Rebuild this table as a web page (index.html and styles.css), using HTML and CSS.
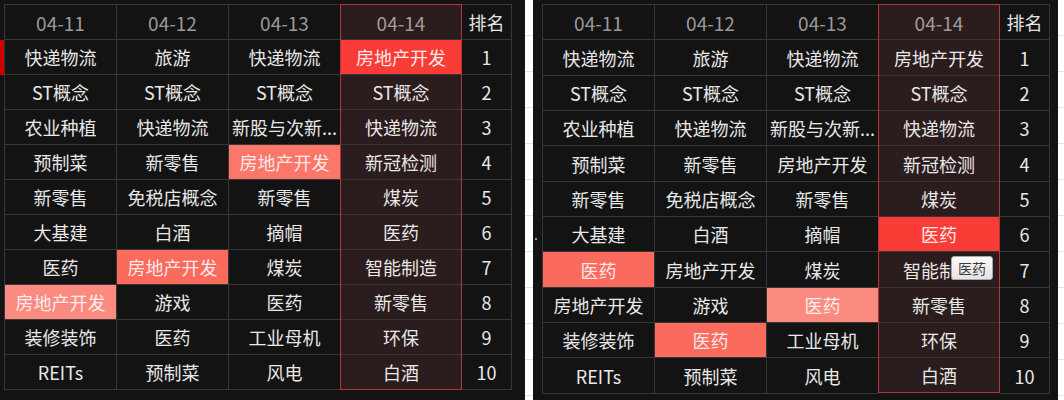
FILE: index.html
```html
<!DOCTYPE html>
<html lang="zh">
<head>
  <meta charset="UTF-8" />
  <title>板块排名</title>
  <link rel="stylesheet" href="styles.css">
</head>
<body>
<div class="screen">

  <!-- Left board -->
  <section class="panel panel-a">
    <div class="marks"><span class="mark"></span></div>
    <div class="board">
      <div class="col">
        <div class="cell head">04-11</div>
        <div class="cell">快递物流</div>
        <div class="cell">ST概念</div>
        <div class="cell">农业种植</div>
        <div class="cell">预制菜</div>
        <div class="cell">新零售</div>
        <div class="cell">大基建</div>
        <div class="cell">医药</div>
        <div class="cell hl3">房地产开发</div>
        <div class="cell">装修装饰</div>
        <div class="cell">REITs</div>
      </div>
      <div class="col">
        <div class="cell head">04-12</div>
        <div class="cell">旅游</div>
        <div class="cell">ST概念</div>
        <div class="cell">快递物流</div>
        <div class="cell">新零售</div>
        <div class="cell">免税店概念</div>
        <div class="cell">白酒</div>
        <div class="cell hl2">房地产开发</div>
        <div class="cell">游戏</div>
        <div class="cell">医药</div>
        <div class="cell">预制菜</div>
      </div>
      <div class="col">
        <div class="cell head">04-13</div>
        <div class="cell">快递物流</div>
        <div class="cell">ST概念</div>
        <div class="cell">新股与次新...</div>
        <div class="cell hl4">房地产开发</div>
        <div class="cell">新零售</div>
        <div class="cell">摘帽</div>
        <div class="cell">煤炭</div>
        <div class="cell">医药</div>
        <div class="cell">工业母机</div>
        <div class="cell">风电</div>
      </div>
      <div class="col hot">
        <div class="cell head">04-14</div>
        <div class="cell hl1">房地产开发</div>
        <div class="cell">ST概念</div>
        <div class="cell">快递物流</div>
        <div class="cell">新冠检测</div>
        <div class="cell">煤炭</div>
        <div class="cell">医药</div>
        <div class="cell">智能制造</div>
        <div class="cell">新零售</div>
        <div class="cell">环保</div>
        <div class="cell">白酒</div>
      </div>
      <div class="col rank">
        <div class="cell head">排名</div>
        <div class="cell">1</div>
        <div class="cell">2</div>
        <div class="cell">3</div>
        <div class="cell">4</div>
        <div class="cell">5</div>
        <div class="cell">6</div>
        <div class="cell">7</div>
        <div class="cell">8</div>
        <div class="cell">9</div>
        <div class="cell">10</div>
      </div>
    </div>
  </section>

  <!-- Right board -->
  <section class="panel panel-b">
    <div class="marks"><span class="dot"></span></div>
    <div class="board">
      <div class="col">
        <div class="cell head">04-11</div>
        <div class="cell">快递物流</div>
        <div class="cell">ST概念</div>
        <div class="cell">农业种植</div>
        <div class="cell">预制菜</div>
        <div class="cell">新零售</div>
        <div class="cell">大基建</div>
        <div class="cell hl2">医药</div>
        <div class="cell">房地产开发</div>
        <div class="cell">装修装饰</div>
        <div class="cell">REITs</div>
      </div>
      <div class="col">
        <div class="cell head">04-12</div>
        <div class="cell">旅游</div>
        <div class="cell">ST概念</div>
        <div class="cell">快递物流</div>
        <div class="cell">新零售</div>
        <div class="cell">免税店概念</div>
        <div class="cell">白酒</div>
        <div class="cell">房地产开发</div>
        <div class="cell">游戏</div>
        <div class="cell hl2">医药</div>
        <div class="cell">预制菜</div>
      </div>
      <div class="col">
        <div class="cell head">04-13</div>
        <div class="cell">快递物流</div>
        <div class="cell">ST概念</div>
        <div class="cell">新股与次新...</div>
        <div class="cell">房地产开发</div>
        <div class="cell">新零售</div>
        <div class="cell">摘帽</div>
        <div class="cell">煤炭</div>
        <div class="cell hl3">医药</div>
        <div class="cell">工业母机</div>
        <div class="cell">风电</div>
      </div>
      <div class="col hot">
        <div class="cell head">04-14</div>
        <div class="cell">房地产开发</div>
        <div class="cell">ST概念</div>
        <div class="cell">快递物流</div>
        <div class="cell">新冠检测</div>
        <div class="cell">煤炭</div>
        <div class="cell hl1">医药</div>
        <div class="cell has-tip">智能制造<span class="tip">医药</span></div>
        <div class="cell">新零售</div>
        <div class="cell">环保</div>
        <div class="cell">白酒</div>
      </div>
      <div class="col rank">
        <div class="cell head">排名</div>
        <div class="cell">1</div>
        <div class="cell">2</div>
        <div class="cell">3</div>
        <div class="cell">4</div>
        <div class="cell">5</div>
        <div class="cell">6</div>
        <div class="cell">7</div>
        <div class="cell">8</div>
        <div class="cell">9</div>
        <div class="cell">10</div>
      </div>
    </div>
  </section>

</div>
</body>
</html>
```

FILE: styles.css
```css
* { box-sizing: border-box; }

body {
  margin: 0;
  font-family: "Noto Sans CJK SC", "Noto Sans", sans-serif;
  background: repeating-linear-gradient(to bottom, #fff 0 35px, #e4e4e4 35px 36px);
}

.screen {
  display: flex;
  gap: 8px;
  height: 400px;
}

.panel {
  width: 525px;
  height: 400px;
  background: #131313;
  display: flex;
  padding-top: 4px;
}

.marks {
  width: 4px;
  flex: none;
}

.mark {
  display: block;
  height: 35px;
  margin-top: 36px;
  background: #d10000;
}

.panel-b .marks { width: 9px; }

.dot {
  display: block;
  width: 2px;
  height: 2px;
  margin: 234px 0 0 2px;
  background: #9a9a9a;
}

.board {
  display: flex;
  align-items: flex-start;
}

.col {
  width: 112px;
  border-top: 1px solid #373737;
  border-left: 1px solid #373737;
}

.cell {
  height: 35px;
  border-bottom: 1px solid #373737;
  display: flex;
  align-items: center;
  justify-content: center;
  font-size: 18px;
  color: #e8e8e8;
  white-space: nowrap;
  overflow: hidden;
}

.panel-b .cell { height: 35.35px; }

.head {
  font-size: 19px;
  color: #9a9a9a;
}

.col.hot {
  width: 122px;
  border: 1px solid #b3353a;
  background: #2b1c1d;
}

.col.hot .cell:last-child {
  border-bottom: none;
  height: 34px;
}

.col.hot .head { color: #a39a9a; }

.col.rank {
  width: 50px;
  border-left: none;
  border-right: 1px solid #373737;
}

.col.rank .head {
  font-size: 18px;
  color: #e4e4e4;
}

.hl1 { background: #f93c36; color: #fde9e7; }
.hl2 { background: #fa6a5d; color: #fde9e7; }
.hl3 { background: #fb8a80; color: #fdecea; }
.hl4 { background: #fb7769; color: #fde9e7; }

.has-tip { position: relative; }

.tip {
  position: absolute;
  top: 4px;
  left: 72px;
  width: 42px;
  height: 24px;
  display: flex;
  align-items: center;
  justify-content: center;
  font-size: 14px;
  color: #3c3c3c;
  background: linear-gradient(#fafafa, #e4e4e6);
  border: 1px solid #a9a9ad;
  border-radius: 3px;
}
```
